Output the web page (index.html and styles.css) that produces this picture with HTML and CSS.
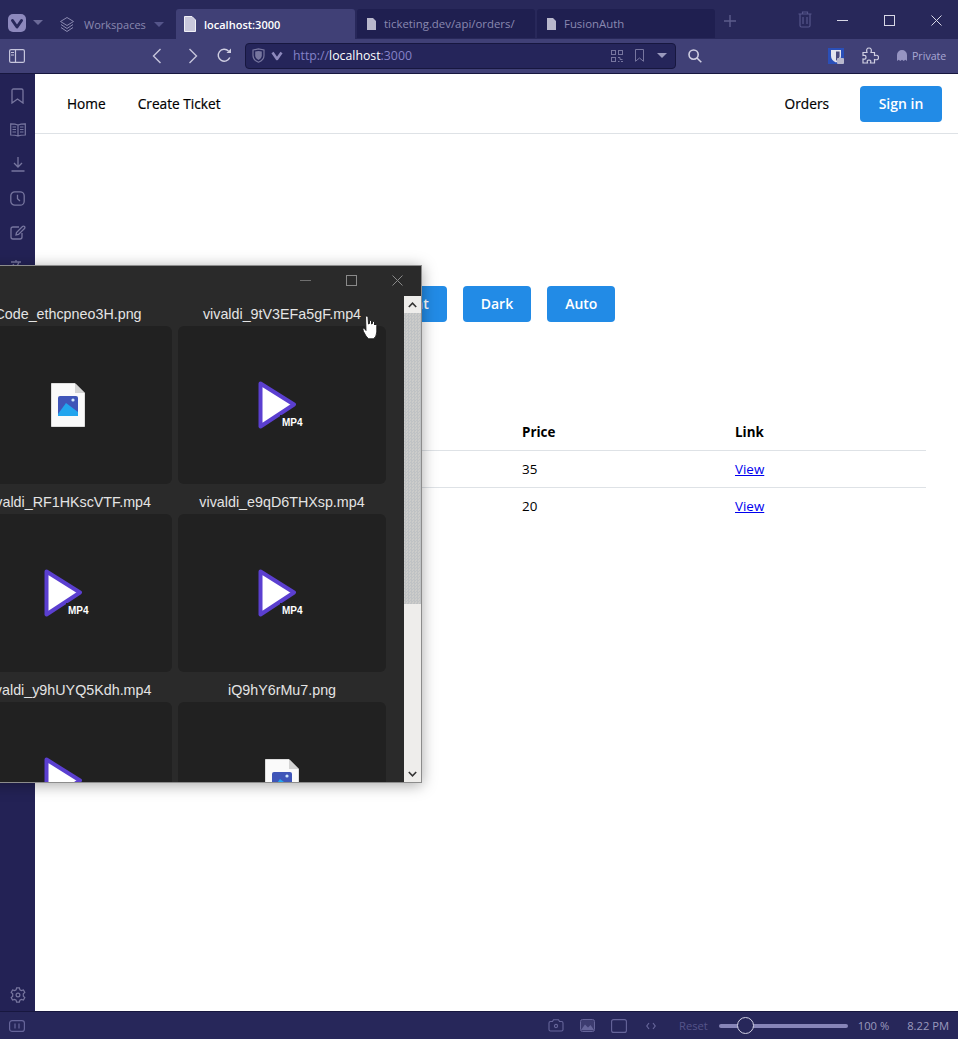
FILE: index.html
```html
<!DOCTYPE html>
<html lang="en">

<head>
    <meta charset="UTF-8">
    <meta name="viewport" content="width=device-width, initial-scale=1.0">
    <title>localhost:3000</title>
    <link rel="stylesheet" href="styles.css">
</head>

<body>
    <!-- browser tabs -->
    <div class="tabbar">
        <svg class="logo" width="18" height="18" viewBox="0 0 18 18"><rect width="18" height="18" rx="5" fill="#8d89bd"/><path d="M4.5 6.5 L9 13 L13.5 6.5" fill="none" stroke="#27285a" stroke-width="3" stroke-linejoin="round" stroke-linecap="round"/></svg>
        <span class="caret logo-caret"></span>
        <div class="workspaces">
            <svg class="ws-icon" width="16" height="17" viewBox="0 0 16 17" fill="none" stroke="currentColor"><path d="M8 1.5 L14.5 5.5 L8 9.5 L1.5 5.5 Z"/><path d="M2 8.5 L8 12.5 L14 8.5"/><path d="M2 11.5 L8 15.5 L14 11.5"/></svg>
            <span>Workspaces</span>
            <span class="caret"></span>
        </div>
        <div class="tab tab-active">
            <svg width="12" height="16" viewBox="0 0 12 16"><path d="M.5.5 H8 L11.5 4 V15.5 H.5 Z" fill="#c9c8dc" stroke="#f0f0f6"/></svg>
            <span>localhost:3000</span>
        </div>
        <div class="tab">
            <svg width="9" height="12" viewBox="0 0 9 12"><path d="M0 0 H6 L9 3 V12 H0 Z" fill="#b9b8cc"/></svg>
            <span>ticketing.dev/api/orders/</span>
        </div>
        <div class="tab">
            <svg width="9" height="12" viewBox="0 0 9 12"><path d="M0 0 H6 L9 3 V12 H0 Z" fill="#b9b8cc"/></svg>
            <span>FusionAuth</span>
        </div>
        <svg class="plus" width="12" height="12" viewBox="0 0 12 12" stroke="#5c5c8c" stroke-width="1.4"><path d="M6 0 V12 M0 6 H12"/></svg>
        <svg class="trash" width="14" height="17" viewBox="0 0 14 17" fill="none" stroke="#55558a" stroke-width="1.2"><path d="M.5 3 H13.5 M4.5 3 V1 H9.5 V3 M2 3 V14.5 Q2 16 3.5 16 H10.5 Q12 16 12 14.5 V3 M5 6 V13 M9 6 V13"/></svg>
        <div class="win-buttons">
            <svg width="11" height="11" viewBox="0 0 11 11" stroke="#d8d8e6"><path d="M0 5.5 H11"/></svg>
            <svg width="11" height="11" viewBox="0 0 11 11" fill="none" stroke="#d8d8e6"><rect x=".5" y=".5" width="10" height="10"/></svg>
            <svg width="11" height="11" viewBox="0 0 11 11" stroke="#d8d8e6"><path d="M.5.5 L10.5 10.5 M10.5.5 L.5 10.5"/></svg>
        </div>
    </div>

    <!-- address bar -->
    <div class="toolbar">
        <svg class="panel-toggle" width="16" height="14" viewBox="0 0 16 14" fill="none" stroke="#c6c5dc" stroke-width="1.2"><rect x=".6" y=".6" width="14.8" height="12.8" rx="1.5"/><path d="M6.5 .6 V13.4 M2 3.5 H5 M2 6 H5"/></svg>
        <svg class="nav-back" width="10" height="16" viewBox="0 0 10 16" fill="none" stroke="#c6c5dc" stroke-width="1.4"><path d="M8.5 1 L1.5 8 L8.5 15"/></svg>
        <svg class="nav-forward" width="10" height="16" viewBox="0 0 10 16" fill="none" stroke="#c6c5dc" stroke-width="1.4"><path d="M1.5 1 L8.5 8 L1.5 15"/></svg>
        <svg class="nav-reload" width="15" height="15" viewBox="0 0 15 15" fill="none" stroke="#d0cfe2" stroke-width="1.4"><path d="M12.8 9.5 A6 6 0 1 1 11.5 3"/><path d="M14 .5 V5 H9.5" fill="#d0cfe2" stroke="none"/></svg>
        <div class="addressbar">
            <svg width="13" height="15" viewBox="0 0 13 15"><path d="M1 2 L6.5 .8 L12 2 V7.5 Q12 12 6.5 14.2 Q1 12 1 7.5 Z" fill="none" stroke="#77769f" stroke-width="1.2"/><path d="M3.2 3.6 L6.5 3 L9.8 3.6 V7.5 Q9.8 10.4 6.5 12 Q3.2 10.4 3.2 7.5 Z" fill="#77769f"/></svg>
            <svg class="addr-v" width="12" height="10" viewBox="0 0 12 10"><path d="M1.5 1.5 L6 8 L10.5 1.5" fill="none" stroke="#8d89bd" stroke-width="2.6" stroke-linejoin="round"/></svg>
            <span class="url"><span class="url-dim">http://</span><span class="url-host">localhost</span><span class="url-dim">:3000</span></span>
            <svg class="addr-qr" width="12" height="12" viewBox="0 0 12 12" fill="none" stroke="#77769f"><rect x=".5" y=".5" width="4" height="4"/><rect x="7.5" y=".5" width="4" height="4"/><rect x=".5" y="7.5" width="4" height="4"/><path d="M7 7.5 H9 V9.5 H11.5 M7 11.5 H8.5 M10 11.5 H12"/></svg>
            <svg class="addr-mark" width="9" height="13" viewBox="0 0 9 13" fill="none" stroke="#77769f"><path d="M.5 .5 H8.5 V12.3 L4.5 9 L.5 12.3 Z"/></svg>
            <span class="caret addr-caret"></span>
        </div>
        <svg class="search" width="14" height="14" viewBox="0 0 14 14" fill="none" stroke="#d0cfe2" stroke-width="1.6"><circle cx="5.6" cy="5.6" r="4.6"/><path d="M9 9 L13.3 13.3"/></svg>
        <svg class="bitwarden" width="16" height="16" viewBox="0 0 16 16"><rect width="16" height="16" fill="#2a4fb8"/><path d="M3 2 H13 V8 Q13 12 8 14.5 Q3 12 3 8 Z" fill="#e4e4ef"/><path d="M8 3.5 H11.6 V8 Q11.6 10.6 8 12.8 Z" fill="#4a4a7e"/><rect x="9" y="10" width="7" height="6" rx="1" fill="#b9b8cc"/></svg>
        <svg class="puzzle" width="17" height="17" viewBox="0 0 17 17" fill="none" stroke="#d0cfe2" stroke-width="1.2"><path d="M1 5.5 H5 Q3.8 1 7 1 Q10.2 1 9 5.5 H12.5 V8.5 Q16.5 7.5 16.5 10.5 Q16.5 13.5 12.5 12.5 V16 H8.5 Q9.5 13 7 13 Q4.5 13 5.5 16 H1 V12 Q4 12.8 4 10.2 Q4 7.8 1 8.5 Z"/></svg>
        <svg class="ghost" width="10" height="11" viewBox="0 0 10 11"><path d="M0 11 V5 A5 5 0 0 1 10 5 V11 L8.3 9.8 L6.7 11 L5 9.8 L3.3 11 L1.7 9.8 Z" fill="#9694c2"/></svg>
        <span class="private">Private</span>
    </div>

    <div class="middle">
        <!-- side panel icons -->
        <div class="sidebar">
            <svg width="13" height="16" viewBox="0 0 13 16" fill="none" stroke="currentColor" stroke-width="1.3"><path d="M1 2.5 Q1 1 2.5 1 H10.5 Q12 1 12 2.5 V15 L6.5 11 L1 15 Z"/></svg>
            <svg width="16" height="14" viewBox="0 0 16 14" fill="none" stroke="currentColor" stroke-width="1.2"><path d="M8 2 Q5.5 .8 .7 .8 V12 Q5.5 12 8 13 Q10.5 12 15.3 12 V.8 Q10.5 .8 8 2 Z M8 2 V13 M2.5 4 H6 M2.5 6.5 H6 M2.5 9 H6 M10 4 H13.5 M10 6.5 H13.5 M10 9 H13.5"/></svg>
            <svg width="14" height="16" viewBox="0 0 14 16" fill="none" stroke="currentColor" stroke-width="1.3"><path d="M7 1 V10.5 M3 7 L7 11 L11 7 M.5 15 H13.5"/></svg>
            <svg width="15" height="15" viewBox="0 0 15 15" fill="none" stroke="currentColor" stroke-width="1.3"><rect x=".8" y=".8" width="13.4" height="13.4" rx="4"/><path d="M7.5 3.8 V7.8 L10 10"/></svg>
            <svg width="16" height="15" viewBox="0 0 16 15" fill="none" stroke="currentColor" stroke-width="1.3"><path d="M9 2 H3 Q1 2 1 4 V12 Q1 14 3 14 H10 Q12 14 12 12 V8"/><path d="M6 10 L6.5 7.5 L12.5 1.5 Q13.5 .7 14.5 1.5 Q15.3 2.5 14.5 3.5 L8.5 9.5 Z"/></svg>
            <svg width="16" height="16" viewBox="0 0 16 16" fill="none" stroke="currentColor" stroke-width="1.3"><path d="M1 3 H11 M6 1 V3 M9 3 Q7 9 1.5 11 M3 5 Q5 9 10 11"/></svg>
            <svg class="gear" width="16" height="16" viewBox="0 0 16 16" fill="none" stroke="currentColor" stroke-width="1.2"><path d="M6.6 .8 H9.4 L9.9 2.8 L11.4 3.6 L13.4 3 L14.8 5.4 L13.3 6.8 V9.2 L14.8 10.6 L13.4 13 L11.4 12.4 L9.9 13.2 L9.4 15.2 H6.6 L6.1 13.2 L4.6 12.4 L2.6 13 L1.2 10.6 L2.7 9.2 V6.8 L1.2 5.4 L2.6 3 L4.6 3.6 L6.1 2.8 Z"/><circle cx="8" cy="8" r="1.9"/></svg>
        </div>

        <!-- the page itself -->
        <div class="page">
            <header class="site-header">
                <nav class="site-nav">
                    <a href="#">Home</a>
                    <a href="#">Create Ticket</a>
                </nav>
                <div class="site-actions">
                    <a href="#">Orders</a>
                    <button class="btn">Sign in</button>
                </div>
            </header>

            <div class="theme-buttons">
                <button class="btn">Light</button>
                <button class="btn">Dark</button>
                <button class="btn">Auto</button>
            </div>

            <table class="orders">
                <thead>
                    <tr>
                        <th></th>
                        <th>Price</th>
                        <th>Link</th>
                    </tr>
                </thead>
                <tbody>
                    <tr>
                        <td></td>
                        <td>35</td>
                        <td><a href="#">View</a></td>
                    </tr>
                    <tr>
                        <td></td>
                        <td>20</td>
                        <td><a href="#">View</a></td>
                    </tr>
                </tbody>
            </table>
        </div>
    </div>

    <!-- status bar -->
    <div class="statusbar">
        <svg class="pause" width="16" height="12" viewBox="0 0 16 12" fill="none" stroke="currentColor" stroke-width="1.2"><rect x=".6" y=".6" width="14.8" height="10.8" rx="2.5"/><path d="M6 3.5 V8.5 M10 3.5 V8.5"/></svg>
        <div class="status-right">
            <svg width="16" height="13" viewBox="0 0 16 13" fill="none" stroke="currentColor" stroke-width="1.1"><path d="M1 4 Q1 2.5 2.5 2.5 H4.5 L5.5 .8 H10.5 L11.5 2.5 H13.5 Q15 2.5 15 4 V10.5 Q15 12 13.5 12 H2.5 Q1 12 1 10.5 Z"/><circle cx="8" cy="7" r="1.6"/></svg>
            <svg width="15" height="13" viewBox="0 0 15 13"><rect x=".5" y=".5" width="14" height="12" rx="2" fill="none" stroke="currentColor"/><rect x="1" y="1" width="13" height="11" rx="1" fill="currentColor" opacity=".35"/><path d="M1 11 L5 5.5 L8 8.5 L10.5 6 L14 11 Z" fill="currentColor"/></svg>
            <svg width="16" height="14" viewBox="0 0 16 14" fill="none" stroke="currentColor" stroke-width="1.1"><rect x=".6" y=".6" width="14.8" height="12.8" rx="2"/></svg>
            <svg class="status-code" width="10" height="8" viewBox="0 0 10 8" fill="none" stroke="currentColor" stroke-width="1.2"><path d="M3 1 L.8 4 L3 7 M7 1 L9.2 4 L7 7"/></svg>
            <span class="reset">Reset</span>
            <div class="zoom-slider"><span class="zoom-thumb"></span></div>
            <span class="zoom-value">100 %</span>
            <span class="clock">8.22 PM</span>
        </div>
    </div>

    <!-- file window on top of the browser -->
    <div class="file-window">
        <div class="file-titlebar">
            <svg width="11" height="11" viewBox="0 0 11 11" stroke="#6f6f6f"><path d="M0 5.5 H11"/></svg>
            <svg width="11" height="11" viewBox="0 0 11 11" fill="none" stroke="#8a8a8a"><rect x=".5" y=".5" width="10" height="10"/></svg>
            <svg width="11" height="11" viewBox="0 0 11 11" stroke="#8a8a8a"><path d="M.5.5 L10.5 10.5 M10.5.5 L.5 10.5"/></svg>
        </div>
        <div class="file-body">
            <div class="file-grid">
                <div class="file-item">
                    <div class="file-name">Code_ethcpneo3H.png</div>
                    <div class="file-card">
                        <svg width="34" height="44" viewBox="0 0 34 44"><path d="M.5.5 H24 L33.5 10 V43.5 H.5 Z" fill="#fafafa" stroke="#ddd"/><path d="M24 .5 V10 H33.5 Z" fill="#d4d4d4"/><rect x="7" y="13" width="20" height="20" rx="2" fill="#3f55b8"/><path d="M7 31 L15 20 L27 29 V33 H7 Z" fill="#22a5ee"/><circle cx="22" cy="17" r="1.6" fill="#cfe6fb"/></svg>
                    </div>
                </div>
                <div class="file-item">
                    <div class="file-name">vivaldi_9tV3EFa5gF.mp4</div>
                    <div class="file-card">
                        <svg width="48" height="48" viewBox="0 0 48 48"><path d="M2.5 2.5 L36 23.5 L2.5 45.5 Z" fill="#fff" stroke="#5b3fd0" stroke-width="4" stroke-linejoin="round"/><rect x="22" y="34" width="24" height="14" fill="#222"/><text x="24" y="45" class="mp4-label">MP4</text></svg>
                    </div>
                </div>
                <div class="file-item">
                    <div class="file-name">vivaldi_RF1HKscVTF.mp4</div>
                    <div class="file-card">
                        <svg width="48" height="48" viewBox="0 0 48 48"><path d="M2.5 2.5 L36 23.5 L2.5 45.5 Z" fill="#fff" stroke="#5b3fd0" stroke-width="4" stroke-linejoin="round"/><rect x="22" y="34" width="24" height="14" fill="#222"/><text x="24" y="45" class="mp4-label">MP4</text></svg>
                    </div>
                </div>
                <div class="file-item">
                    <div class="file-name">vivaldi_e9qD6THXsp.mp4</div>
                    <div class="file-card">
                        <svg width="48" height="48" viewBox="0 0 48 48"><path d="M2.5 2.5 L36 23.5 L2.5 45.5 Z" fill="#fff" stroke="#5b3fd0" stroke-width="4" stroke-linejoin="round"/><rect x="22" y="34" width="24" height="14" fill="#222"/><text x="24" y="45" class="mp4-label">MP4</text></svg>
                    </div>
                </div>
                <div class="file-item">
                    <div class="file-name">vivaldi_y9hUYQ5Kdh.mp4</div>
                    <div class="file-card">
                        <svg width="48" height="48" viewBox="0 0 48 48"><path d="M2.5 2.5 L36 23.5 L2.5 45.5 Z" fill="#fff" stroke="#5b3fd0" stroke-width="4" stroke-linejoin="round"/><rect x="22" y="34" width="24" height="14" fill="#222"/><text x="24" y="45" class="mp4-label">MP4</text></svg>
                    </div>
                </div>
                <div class="file-item">
                    <div class="file-name">iQ9hY6rMu7.png</div>
                    <div class="file-card">
                        <svg width="34" height="44" viewBox="0 0 34 44"><path d="M.5.5 H24 L33.5 10 V43.5 H.5 Z" fill="#fafafa" stroke="#ddd"/><path d="M24 .5 V10 H33.5 Z" fill="#d4d4d4"/><rect x="7" y="13" width="20" height="20" rx="2" fill="#3f55b8"/><path d="M7 31 L15 20 L27 29 V33 H7 Z" fill="#22a5ee"/><circle cx="22" cy="17" r="1.6" fill="#cfe6fb"/></svg>
                    </div>
                </div>
            </div>
            <div class="scrollbar">
                <div class="scroll-btn"><svg width="9" height="6" viewBox="0 0 9 6" fill="none" stroke="#333" stroke-width="1.6"><path d="M.8 5 L4.5 1.2 L8.2 5"/></svg></div>
                <div class="scroll-thumb"></div>
                <div class="scroll-rest"></div>
                <div class="scroll-btn"><svg width="9" height="6" viewBox="0 0 9 6" fill="none" stroke="#333" stroke-width="1.6"><path d="M.8 1 L4.5 4.8 L8.2 1"/></svg></div>
            </div>
        </div>
    </div>

    <!-- mouse pointer -->
    <svg class="hand" width="16" height="25" viewBox="0 0 16 25"><path d="M3.5 1.5 Q5 .5 6 1.5 L6.5 9 L7.5 8.5 V6 Q8.5 5 9.5 6 V9 L10.5 8.5 V7 Q11.5 6 12.5 7 V10 L13 9.5 Q14.5 9 14.8 10.5 V17 Q14.5 22 11.5 23.8 H6.5 Q4 22 1.5 16.5 L.8 14 Q1.5 12.5 3 14 L4 15.5 Z" fill="#fff" stroke="#1a1a1a" stroke-width=".9" stroke-linejoin="round"/></svg>
</body>

</html>
```

FILE: styles.css
```css
* {
    box-sizing: border-box;
}

html,
body {
    height: 100%;
}

body {
    position: relative;
    display: flex;
    flex-direction: column;
    margin: 0;
    overflow: hidden;
    font-family: 'Open Sans', 'Noto Sans', sans-serif;
    background-color: #fff;
}

svg {
    display: block;
    flex: none;
}

.caret {
    flex: none;
    width: 0;
    height: 0;
    border-left: 5px solid transparent;
    border-right: 5px solid transparent;
    border-top: 5px solid #5f5f92;
}

/* tab strip */
.tabbar {
    display: flex;
    align-items: flex-end;
    height: 39px;
    flex: none;
    padding-left: 8px;
    background-color: #28285a;
    color: #9a99bd;
    font-size: 11.4px;
}

.logo {
    margin-bottom: 7px;
}

.logo-caret {
    margin: 0 0 14px 7px;
    border-top-color: #6b6a98;
}

.workspaces {
    display: flex;
    align-items: center;
    flex: none;
    width: 125px;
    height: 30px;
    margin-left: 8px;
    padding-left: 8px;
    color: #8a89b0;
    font-size: 11px;
}

.ws-icon {
    margin-right: 9px;
}

.workspaces .caret {
    margin-left: 8px;
    border-top-color: #55558a;
}

.tab {
    display: flex;
    align-items: center;
    gap: 8px;
    flex: none;
    width: 178px;
    height: 29px;
    margin-right: 2px;
    margin-bottom: 1px;
    padding-left: 10px;
    border-radius: 3px 3px 0 0;
    background-color: #1f1f50;
    color: #8a89b0;
}

.tab-active {
    gap: 8px;
    width: 179px;
    height: 30px;
    margin-bottom: 0;
    padding-left: 8px;
    background-color: #404076;
    color: #fff;
    font-size: 11px;
    font-weight: 600;
}

.plus {
    margin: 0 0 12px 7px;
}

.trash {
    margin: 0 0 11px 62px;
}

.win-buttons {
    display: flex;
    gap: 36px;
    padding-left: 25px;
    align-self: flex-start;
    margin-top: 15px;
}

/* address bar */
.toolbar {
    display: flex;
    align-items: center;
    height: 35px;
    flex: none;
    padding: 0 0 1px 9px;
    background-color: #404076;
    border-bottom: 1px solid #17173f;
}

.nav-back {
    margin-left: 127px;
}

.nav-forward {
    margin-left: 26px;
}

.nav-reload {
    margin-left: 19px;
}

.addressbar {
    display: flex;
    align-items: center;
    flex: none;
    width: 431px;
    height: 26px;
    margin-left: 13px;
    padding: 0 8px 0 6px;
    border: 1px solid #17173f;
    border-radius: 4px;
    background-color: #25255a;
    font-size: 12.3px;
}

.addr-v {
    margin-left: 6px;
}

.url {
    margin-left: 10px;
}

.url-dim {
    color: #8482c8;
}

.url-host {
    color: #fff;
}

.addr-qr {
    margin-left: auto;
}

.addr-mark {
    margin-left: 12px;
}

.addr-caret {
    margin-left: 13px;
    border-top-color: #9a99bd;
}

.search {
    margin-left: 12px;
}

.bitwarden {
    margin-left: 126px;
}

.puzzle {
    margin-left: 18px;
}

.ghost {
    margin-left: 18px;
}

.private {
    margin-left: 5px;
    color: #a9a8d4;
    font-size: 10.6px;
}

.middle {
    display: flex;
    flex: 1;
    min-height: 0;
}

.sidebar {
    display: grid;
    grid-template-rows: repeat(6, 34.2px) 1fr;
    justify-items: center;
    align-items: center;
    width: 35px;
    flex: none;
    padding: 5px 0 8px;
    background-color: #232255;
    color: #77769f;
}

.sidebar .gear {
    align-self: end;
}

/* page content */
.page {
    flex: 1;
    min-width: 0;
    background-color: #fff;
}

.site-header {
    display: flex;
    align-items: center;
    justify-content: space-between;
    height: 60px;
    padding: 0 16px 0 32px;
    border-bottom: 1px solid #dee2e6;
    font-size: 13.7px;
}

.site-header a {
    color: #000;
    text-decoration: none;
    font-weight: 500;
    -webkit-text-stroke: 0.2px #000;
}

.site-nav {
    display: flex;
    gap: 32px;
}

.site-actions {
    display: flex;
    align-items: center;
    gap: 31px;
}

.btn {
    height: 36px;
    padding: 0 18px 1px;
    border: none;
    border-radius: 4px;
    background-color: #228be6;
    color: #fff;
    font-family: inherit;
    font-size: 14px;
    font-weight: 600;
}

.site-actions .btn {
    width: 82px;
    padding: 0;
}

.theme-buttons {
    display: flex;
    gap: 16px;
    margin: 152px 0 0 342px;
}

.orders {
    width: 818px;
    margin: 91px 0 0 73px;
    border-collapse: collapse;
    table-layout: fixed;
    font-size: 13.4px;
}

.orders th:nth-child(1) {
    width: 414px;
}

.orders th:nth-child(2) {
    width: 213px;
}

.orders th,
.orders td {
    height: 37px;
    padding: 0;
    text-align: left;
    color: #000;
}

.orders th {
    padding-top: 2px;
    border-bottom: 1px solid #dee2e6;
}

.orders tbody tr:first-child td {
    border-bottom: 1px solid #dee2e6;
}

.orders a {
    color: #0000ee;
}

/* status bar */
.statusbar {
    display: flex;
    align-items: center;
    justify-content: space-between;
    height: 28px;
    flex: none;
    padding: 0 9px;
    background-color: #27275a;
    border-top: 1px solid #17173f;
    color: #66659a;
}

.status-right {
    display: flex;
    align-items: center;
    font-size: 11.2px;
}

.status-right svg {
    margin-right: 16px;
}

.status-right .status-code {
    margin-left: 3px;
}

.reset {
    margin-left: 7px;
    color: #55548a;
}

.zoom-slider {
    position: relative;
    width: 129px;
    height: 4px;
    margin-left: 11px;
    border-radius: 2px;
    background-color: #8785b8;
}

.zoom-thumb {
    position: absolute;
    left: 18px;
    top: -7px;
    width: 17px;
    height: 17px;
    border: 1px solid #d0cfe2;
    border-radius: 50%;
    background-color: #27275a;
}

.zoom-value {
    margin-left: 10px;
    color: #9a99bd;
}

.clock {
    margin-left: 18px;
    color: #9a99bd;
}

/* file window */
.file-window {
    position: absolute;
    left: -50px;
    top: 265px;
    display: flex;
    flex-direction: column;
    width: 472px;
    height: 518px;
    border: 1px solid #8c8c8c;
    background-color: #2a2a2a;
    box-shadow: 0 2px 14px rgba(0, 0, 0, 0.35);
    font-family: 'Liberation Sans', Arial, sans-serif;
}

.file-titlebar {
    display: flex;
    justify-content: flex-end;
    align-items: center;
    gap: 35px;
    height: 30px;
    flex: none;
    padding: 0 18px 1px 0;
}

.file-body {
    display: flex;
    flex: 1;
    min-height: 0;
}

.file-grid {
    display: grid;
    grid-template-columns: 208px 208px;
    grid-auto-rows: 188px;
    column-gap: 6px;
    flex: 1;
    padding-left: 13px;
    overflow: hidden;
}

.file-name {
    height: 30px;
    padding-top: 10px;
    color: #e4e4e4;
    font-size: 14.3px;
    line-height: 16px;
    text-align: center;
    white-space: nowrap;
}

.file-card {
    display: flex;
    align-items: center;
    justify-content: center;
    height: 158px;
    border-radius: 6px;
    background-color: #212121;
}

.mp4-label {
    fill: #fff;
    font-family: 'Liberation Sans', Arial, sans-serif;
    font-size: 10px;
    font-weight: 700;
}

.scrollbar {
    display: flex;
    flex-direction: column;
    width: 17px;
    flex: none;
    background-color: #eeedeb;
}

.scroll-btn {
    display: flex;
    align-items: center;
    justify-content: center;
    height: 17px;
    flex: none;
}

.scroll-thumb {
    height: 291px;
    flex: none;
    background: repeating-conic-gradient(#bfc2c4 0 25%, #ccccca 0 50%) 0 0 / 3px 3px;
}

.scroll-rest {
    flex: 1;
}

.hand {
    position: absolute;
    left: 362px;
    top: 315px;
}
```
